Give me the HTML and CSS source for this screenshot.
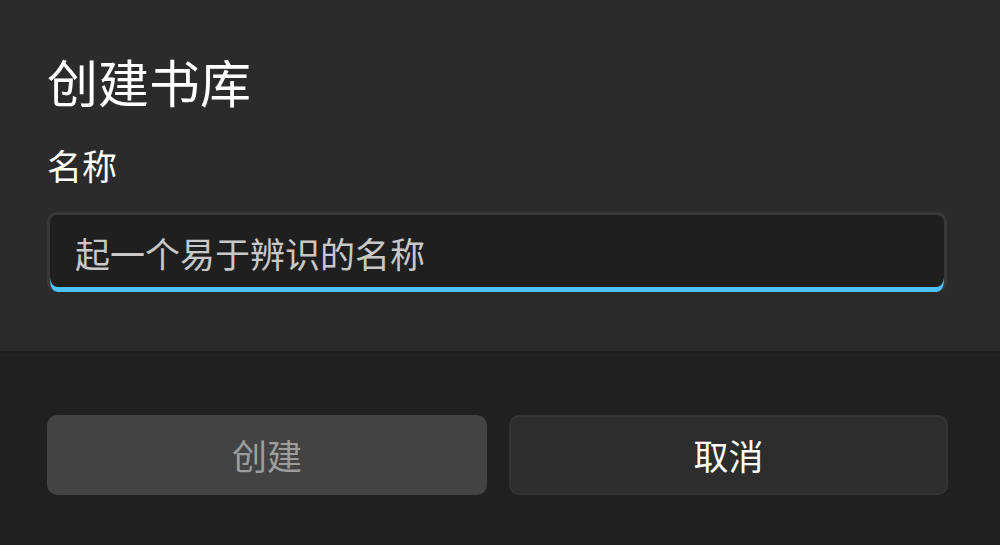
FILE: index.html
```html
<!DOCTYPE html>
<html lang="zh-CN">
<head>
<meta charset="utf-8">
<link rel="stylesheet" href="styles.css">
</head>
<body>
<div class="dialog">
  <div class="content">
    <h1 class="title">创建书库</h1>
    <label class="label">名称</label>
    <div class="input">
      <span class="placeholder">起一个易于辨识的名称</span>
    </div>
  </div>
  <div class="footer">
    <button class="btn btn-primary" disabled>创建</button>
    <button class="btn btn-secondary">取消</button>
  </div>
</div>
</body>
</html>
```
FILE: styles.css
```css
html, body {
  margin: 0;
  padding: 0;
  background: #202020;
  font-family: "Noto Sans CJK SC", "Noto Sans", sans-serif;
}
.dialog {
  width: 1000px;
  height: 545px;
  display: flex;
  flex-direction: column;
  overflow: hidden;
}
.content {
  background: #2b2b2b;
  height: 353px;
  box-sizing: border-box;
  padding: 46px 53px 0 47px;
  border-bottom: 2px solid #1c1c1c;
  display: flex;
  flex-direction: column;
}
.title {
  margin: 0;
  font-size: 51px;
  line-height: 70px;
  font-weight: 400;
  color: #ffffff;
}
.label {
  margin-top: 24px;
  font-size: 35px;
  line-height: 50px;
  color: #ffffff;
}
.input {
  margin-top: 22px;
  height: 80px;
  box-sizing: border-box;
  background: #1f1f1f;
  border: 3px solid #383838;
  border-bottom: none;
  border-radius: 10px;
  box-shadow: inset 0 -5px 0 #4cc2ff;
  display: flex;
  align-items: center;
  padding: 0 25px 2px;
  overflow: hidden;
}
.placeholder {
  font-size: 35px;
  color: #c8c8c8;
  line-height: 50px;
}
.footer {
  flex: 1;
  background: #202020;
  display: flex;
  gap: 22px;
  padding: 62px 0 0 47px;
}
.btn {
  flex: none;
  box-sizing: border-box;
  margin: 0;
  height: 80px;
  border-radius: 10px;
  font-family: inherit;
  font-size: 35px;
  line-height: 50px;
  padding: 0;
}
.btn-primary {
  width: 440px;
  background: #434343;
  border: none;
  color: #9d9d9d;
}
.btn-secondary {
  width: 439px;
  background: #2d2d2d;
  border: 2px solid #343434;
  color: #ffffff;
}
```
